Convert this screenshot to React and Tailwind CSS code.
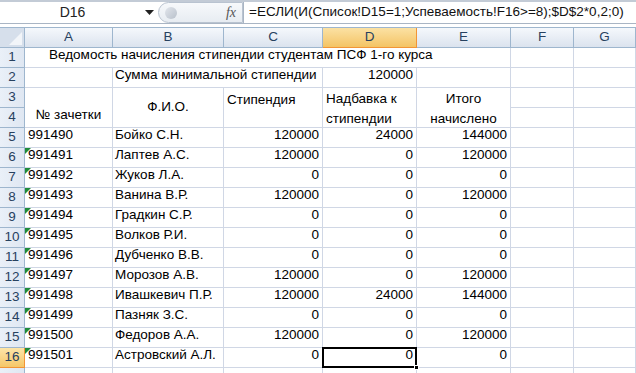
import React from "react";

const rows = [
  [5, "991490", "Бойко С.Н.", "120000", "24000", "144000"],
  [6, "991491", "Лаптев А.С.", "120000", "0", "120000"],
  [7, "991492", "Жуков Л.А.", "0", "0", "0"],
  [8, "991493", "Ванина В.Р.", "120000", "0", "120000"],
  [9, "991494", "Градкин С.Р.", "0", "0", "0"],
  [10, "991495", "Волков Р.И.", "0", "0", "0"],
  [11, "991496", "Дубченко В.В.", "0", "0", "0"],
  [12, "991497", "Морозов А.В.", "120000", "0", "120000"],
  [13, "991498", "Ивашкевич П.Р.", "120000", "24000", "144000"],
  [14, "991499", "Пазняк З.С.", "0", "0", "0"],
  [15, "991500", "Федоров А.А.", "120000", "0", "120000"],
  [16, "991501", "Астровский А.Л.", "0", "0", "0"],
];

const cell = "border-r border-b border-[#d0d7e5] bg-white";
const rowHdr =
  "flex items-center justify-center border-r border-b border-[#9eb6ce] bg-gradient-to-r from-[#eaf0f8] to-[#dfe7f2] text-[#27415f]";
const rowHdrSel =
  "flex items-center justify-center border-r border-b border-[#f29536] bg-gradient-to-b from-[#fde5a8] to-[#f5c768] text-[#27415f]";
const colHdr =
  "flex items-center justify-center border-r border-b border-[#9eb6ce] bg-gradient-to-b from-[#f5f8fc] to-[#dbe3ee] text-[#27415f]";
const colHdrSel =
  "flex items-center justify-center border-r border-b border-[#f29536] bg-gradient-to-b from-[#fbe1a3] to-[#f4c463] text-[#27415f]";

const Tri = () => (
  <svg className="absolute left-0 top-0" width="6" height="6">
    <polygon points="0,0 6,0 0,6" fill="#1f8c3a" />
  </svg>
);

export default function App() {
  return (
    <div
      className="w-[636px] h-[373px] overflow-hidden bg-white text-[13.5px] text-black"
      style={{ fontFamily: '"Liberation Sans", Arial, sans-serif' }}
    >
      {/* formula bar */}
      <div className="flex h-[24px] border-t-2 border-b border-t-[#c3cbd6] border-b-[#a9b5c4] bg-white">
        <div className="flex w-[158px] items-center">
          <div className="flex-1 text-center text-[14px] text-[#222]">D16</div>
          <svg width="9" height="6" className="mr-[4px]">
            <polygon points="0,0 9,0 4.5,5" fill="#222" />
          </svg>
        </div>
        <div className="flex w-[85px] items-center rounded-l-full border border-[#b9c3d0] bg-gradient-to-b from-[#f7f9fb] to-[#e7ecf2]">
          <div className="ml-[6px] h-[12px] w-[12px] rounded-full bg-gradient-to-br from-[#e2e6ec] to-[#b8c0cb]" />
          <div className="flex-1" />
          <span
            className="mr-[6px] text-[14px] italic text-[#555]"
            style={{ fontFamily: '"Liberation Serif", serif' }}
          >
            fx
          </span>
        </div>
        <div className="flex flex-1 items-center border-l border-[#a9b5c4] pl-[5px] text-[13.5px] text-[#111] whitespace-nowrap">
          =ЕСЛИ(И(Список!D15=1;Успеваемость!F16&gt;=8);$D$2*0,2;0)
        </div>
      </div>
      <div className="h-[3px] bg-white" />

      {/* sheet */}
      <div className="grid grid-cols-[25px_88px_111px_99px_94px_94px_63px_62px] auto-rows-[20px] border-t border-[#9eb6ce]">
        <div className="relative border-r border-b border-[#9eb6ce] bg-[#d6dfeb]">
          <svg className="absolute right-[2px] bottom-[2px]" width="13" height="13">
            <polygon points="13,0 13,13 0,13" fill="#f2f5f9" />
          </svg>
        </div>
        <div className={colHdr}>A</div>
        <div className={colHdr}>B</div>
        <div className={colHdr}>C</div>
        <div className={colHdrSel}>D</div>
        <div className={colHdr}>E</div>
        <div className={colHdr}>F</div>
        <div className={colHdr}>G</div>

        {/* row 1 */}
        <div className={rowHdr}>1</div>
        <div className={`col-span-5 ${cell} flex items-end pb-[2px] pl-[24px] whitespace-nowrap`}>
          Ведомость начисления стипендии студентам ПСФ 1-го курса
        </div>
        <div className={cell} />
        <div className={cell} />

        {/* row 2 */}
        <div className={rowHdr}>2</div>
        <div className={cell} />
        <div className={`col-span-2 ${cell} flex items-end pb-[2px] pl-[2px] whitespace-nowrap`}>
          Сумма минимальной стипендии
        </div>
        <div className={`${cell} flex items-end justify-end pb-[2px] pr-[3px]`}>120000</div>
        <div className={cell} />
        <div className={cell} />
        <div className={cell} />

        {/* rows 3-4 */}
        <div className={rowHdr}>3</div>
        <div className={`row-span-2 ${cell} flex items-end justify-center pb-[2px]`}>№ зачетки</div>
        <div className={`row-span-2 ${cell} flex items-center justify-center`}>Ф.И.О.</div>
        <div className={`row-span-2 ${cell} pl-[3px] pt-[2px]`}>Стипендия</div>
        <div className={`row-span-2 ${cell} pl-[3px] pt-[2px] leading-[20px]`}>
          <div className="-mt-[1px]">Надбавка к</div>
          <div>стипендии</div>
        </div>
        <div className={`row-span-2 ${cell} pt-[2px] text-center leading-[20px]`}>
          <div className="-mt-[1px]">Итого</div>
          <div>начислено</div>
        </div>
        <div className={cell} />
        <div className={cell} />
        <div className={rowHdr}>4</div>
        <div className={cell} />
        <div className={cell} />

        {/* data rows */}
        {rows.map(([n, id, name, c, d, e]) => (
          <React.Fragment key={n}>
            <div className={n === 16 ? rowHdrSel : rowHdr}>{n}</div>
            <div className={`relative ${cell} flex items-end pb-[2px] pl-[3px]`}>
              {n > 5 && <Tri />}
              {id}
            </div>
            <div className={`${cell} flex items-end pb-[2px] pl-[2px] whitespace-nowrap`}>{name}</div>
            <div className={`${cell} flex items-end justify-end pb-[2px] pr-[3px]`}>{c}</div>
            <div className={`relative ${cell} flex items-end justify-end pb-[2px] pr-[3px]`}>
              {n === 16 && (
                <>
                  <div className="absolute -left-[1px] -top-[1px] h-[21px] w-[95px] border-2 border-black" />
                  <div className="absolute -right-[3px] -bottom-[3px] h-[5px] w-[5px] border border-white bg-black" />
                </>
              )}
              {d}
            </div>
            <div className={`${cell} flex items-end justify-end pb-[2px] pr-[3px]`}>{e}</div>
            <div className={cell} />
            <div className={cell} />
          </React.Fragment>
        ))}

        {/* row 17, cut off by the window */}
        <div className={rowHdr} />
        <div className={cell} />
        <div className={cell} />
        <div className={cell} />
        <div className={cell} />
        <div className={cell} />
        <div className={cell} />
        <div className={cell} />
      </div>
    </div>
  );
}
